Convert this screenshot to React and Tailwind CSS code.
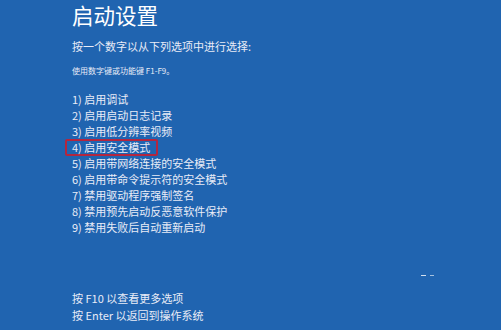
export default function App() {
  const items = [
    "1) 启用调试",
    "2) 启用启动日志记录",
    "3) 启用低分辨率视频",
    "4) 启用安全模式",
    "5) 启用带网络连接的安全模式",
    "6) 启用带命令提示符的安全模式",
    "7) 禁用驱动程序强制签名",
    "8) 禁用预先启动反恶意软件保护",
    "9) 禁用失败后自动重新启动",
  ];
  return (
    <div
      className="relative w-[501px] h-[330px] overflow-hidden bg-[#2064b0] text-[#e9ecf7] pl-[72px] pt-px"
      style={{ fontFamily: '"Noto Sans CJK SC", "Noto Sans", sans-serif' }}
    >
      <div className="text-[21.5px] leading-[28px] text-white">启动设置</div>
      <div className="mt-[9px] text-[11px] leading-[16px]">按一个数字以从下列选项中进行选择:</div>
      <div className="mt-[11px] text-[8px] leading-[12px]">使用数字键或功能键 F1-F9。</div>
      <div className="mt-[14px] flex flex-col text-[11px] leading-[16px]">
        {items.map((t, i) =>
          i === 3 ? (
            <div key={i} className="h-[16px] flex items-start">
              <div className="-ml-[7px] w-[93px] h-[17px] pl-[5px] border-2 border-[#b3263f] rounded-[2px] leading-[13px] shrink-0">
                {t}
              </div>
            </div>
          ) : (
            <div key={i} className="h-[16px]">
              {t}
            </div>
          )
        )}
      </div>
      <div className="mt-[55px] flex flex-col text-[11px] leading-[17px]">
        <div>按 F10 以查看更多选项</div>
        <div>按 Enter 以返回到操作系统</div>
      </div>
      <div className="absolute left-[421px] top-[275px] w-[5px] h-px bg-white/80" />
      <div className="absolute left-[430px] top-[275px] w-[4px] h-px bg-white/60" />
    </div>
  );
}
